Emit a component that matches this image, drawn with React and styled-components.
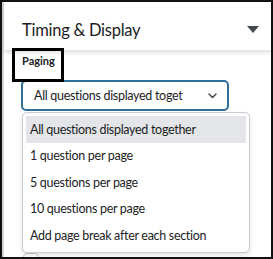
import React from "react";
import styled, { createGlobalStyle } from "styled-components";

const Global = createGlobalStyle`
  html, body { margin: 0; padding: 0; background: #fff; }
  body { font-family: Lato, "Noto Sans", sans-serif; }
  * { box-sizing: border-box; }
`;

const Frame = styled.div`
  position: relative;
  width: 273px;
  height: 259px;
  border: 2px solid #111;
  background: #fff;
  overflow: hidden;
`;

const Inner = styled.div`
  height: 100%;
  border-left: 2px solid #d4d4d4;
  display: flex;
  flex-direction: column;
`;

const Header = styled.div`
  height: 48px;
  flex-shrink: 0;
  display: flex;
  align-items: center;
  justify-content: space-between;
  padding: 7px 12px 0 18px;
  background: #fff;
  box-shadow: 0 3px 4px rgba(0, 0, 0, 0.12);
  position: relative;
  z-index: 1;
`;

const Title = styled.h2`
  margin: 0;
  font-size: 16.5px;
  font-weight: 400;
  color: #1c1d1e;
  letter-spacing: -0.25px;
`;

const Body = styled.div`
  position: relative;
  padding: 4px 0 0 17px;
  display: flex;
  flex-direction: column;
`;

const Label = styled.div`
  font-size: 11px;
  font-weight: 700;
  color: #202122;
  line-height: 14px;
  padding-left: 1px;
`;

const Annotation = styled.div`
  position: absolute;
  left: 8px;
  top: -2px;
  width: 52px;
  height: 34px;
  border: 3px solid #000;
  z-index: 2;
`;

const SelectWrap = styled.div`
  position: relative;
  margin-top: 12px;
  width: 208px;
`;

const SelectBox = styled.div`
  height: 31px;
  border: 2px solid #2f6f99;
  border-radius: 5px;
  display: flex;
  align-items: center;
  justify-content: space-between;
  padding: 0 10px 0 11px;
  font-size: 12.5px;
  letter-spacing: -0.3px;
  color: #1c1d1e;
  white-space: nowrap;
`;

const Menu = styled.ul`
  position: absolute;
  top: 32px;
  left: 1px;
  width: 228px;
  margin: 0;
  padding: 3px 3px;
  list-style: none;
  background: #fff;
  border: 1px solid #c8cdd2;
  border-radius: 5px;
  box-shadow: 0 2px 4px rgba(0, 0, 0, 0.12);
  z-index: 3;
`;

const Item = styled.li`
  height: 26.5px;
  display: flex;
  align-items: center;
  padding-left: 4px;
  font-size: 12.5px;
  letter-spacing: -0.3px;
  color: #1c1d1e;
  white-space: nowrap;
  background: ${(p) => (p.$active ? "#e3e5e8" : "transparent")};
`;

const Peek = styled.div`
  margin-top: 142px;
  margin-left: 2px;
  width: 16px;
  height: 12px;
  border: 1px solid #c8cdd2;
  border-radius: 4px;
`;

const options = [
  "All questions displayed together",
  "1 question per page",
  "5 questions per page",
  "10 questions per page",
  "Add page break after each section",
];

export default function App() {
  return (
    <>
      <Global />
      <Frame>
        <Inner>
          <Header>
            <Title>Timing &amp; Display</Title>
            <svg width="12" height="7" viewBox="0 0 12 7">
              <path d="M0 0 L12 0 L6 7 Z" fill="#46494c" />
            </svg>
          </Header>
          <Body>
            <Annotation />
            <Label>Paging</Label>
            <SelectWrap>
              <SelectBox>
                <span>All questions displayed toget</span>
                <svg width="9" height="6" viewBox="0 0 9 6">
                  <path d="M1 1 L4.5 4.5 L8 1" fill="none" stroke="#494c4e" strokeWidth="1.5" strokeLinecap="round" strokeLinejoin="round" />
                </svg>
              </SelectBox>
              <Menu>
                {options.map((o, i) => (
                  <Item key={o} $active={i === 0}>{o}</Item>
                ))}
              </Menu>
            </SelectWrap>
            <Peek />
          </Body>
        </Inner>
      </Frame>
    </>
  );
}
